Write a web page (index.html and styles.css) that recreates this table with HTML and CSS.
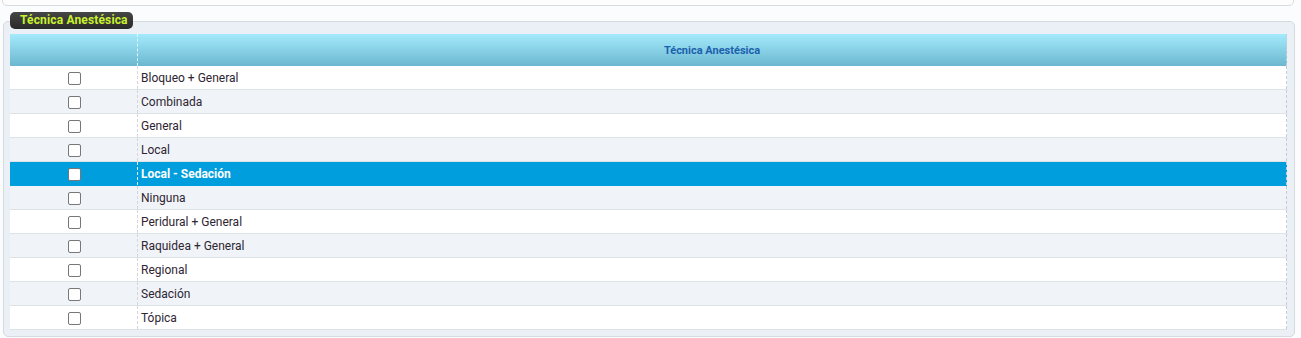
FILE: index.html
```html
<!DOCTYPE html>
<html lang="es">
<head>
<meta charset="utf-8">
<link rel="stylesheet" href="styles.css">
</head>
<body>
<div class="topbox"></div>
<div class="group">
  <div class="legend">Técnica Anestésica</div>
  <div class="panel">
    <table class="grid">
      <thead>
        <tr><th class="c1"></th><th class="c2">Técnica Anestésica</th></tr>
      </thead>
      <tbody>
        <tr><td class="c1"><span class="cb"></span></td><td class="c2">Bloqueo + General</td></tr>
        <tr class="alt"><td class="c1"><span class="cb"></span></td><td class="c2">Combinada</td></tr>
        <tr><td class="c1"><span class="cb"></span></td><td class="c2">General</td></tr>
        <tr class="alt"><td class="c1"><span class="cb"></span></td><td class="c2">Local</td></tr>
        <tr class="sel"><td class="c1"><span class="cb"></span></td><td class="c2">Local - Sedación</td></tr>
        <tr class="alt"><td class="c1"><span class="cb"></span></td><td class="c2">Ninguna</td></tr>
        <tr><td class="c1"><span class="cb"></span></td><td class="c2">Peridural + General</td></tr>
        <tr class="alt"><td class="c1"><span class="cb"></span></td><td class="c2">Raquidea + General</td></tr>
        <tr><td class="c1"><span class="cb"></span></td><td class="c2">Regional</td></tr>
        <tr class="alt"><td class="c1"><span class="cb"></span></td><td class="c2">Sedación</td></tr>
        <tr><td class="c1"><span class="cb"></span></td><td class="c2">Tópica</td></tr>
      </tbody>
    </table>
  </div>
</div>
</body>
</html>
```
FILE: styles.css
```css
html, body {
  margin: 0;
  padding: 0;
  background: #fbfcfd;
  font-family: Roboto, "Liberation Sans", Arial, sans-serif;
}
body {
  width: 1301px;
  height: 338px;
  overflow: hidden;
  position: relative;
}
.topbox {
  margin: -10px 7px 0 2px;
  height: 14px;
  border: 1px solid #d9dcdf;
  border-radius: 0 0 5px 5px;
  background: #fdfdfd;
}
.group {
  position: relative;
  margin: 15px 6px 0 3px;
}
.legend {
  position: absolute;
  left: 7px;
  top: -9px;
  width: 123px;
  height: 17px;
  box-sizing: border-box;
  background: linear-gradient(#464646, #2a2a2a);
  border-radius: 5px;
  color: #c8f22e;
  font-weight: bold;
  font-size: 12px;
  letter-spacing: 0.15px;
  line-height: 17px;
  padding-left: 10px;
  z-index: 2;
}
.panel {
  border: 1px solid #d5dade;
  border-radius: 5px;
  background: #ebf0f6;
  padding: 12px 8px 6px 6px;
}
.grid {
  width: 1277px;
  border-collapse: collapse;
  table-layout: fixed;
  font-size: 12px;
  border-right: 1px dashed #c8cdd2;
}
.grid th {
  height: 32px;
  padding: 0;
  background: linear-gradient(#a4eafc, #6cb7cf);
  color: #1c61ad;
  font-size: 11px;
  font-weight: bold;
  text-align: center;
}
.grid th.c1 { border-right: 1px dashed #e8f6fb; }
.grid .c1 { width: 127px; }
.grid td {
  height: 23px;
  padding: 0;
  border-bottom: 1px solid #dde2e7;
  background: #ffffff;
  color: #2e2532;
}
.grid tr.alt td { background: #f0f4f8; }
.grid td.c1 {
  text-align: center;
  border-right: 1px dashed #d3d7db;
}
.grid td.c2 { padding-left: 3px; }
.grid tr.sel td {
  background: #009edc;
  color: #ffffff;
  font-weight: bold;
  border-bottom-color: #009edc;
}
.grid tr.sel td.c1 { border-right-color: #e6f4fb; }
.cb {
  display: inline-block;
  width: 11px;
  height: 11px;
  border: 1px solid #777;
  border-radius: 2px;
  background: #fff;
  vertical-align: middle;
  margin-left: 2px;
}
```
